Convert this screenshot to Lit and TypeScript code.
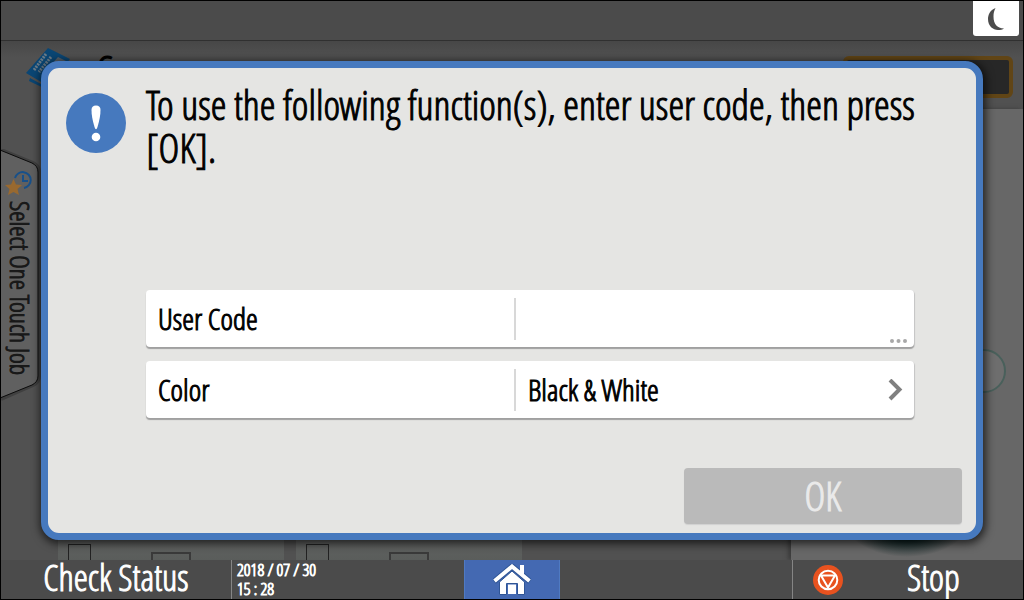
import { LitElement, html, css } from "lit";
import { customElement, state } from "lit/decorators.js";

const base = css`
  * {
    box-sizing: border-box;
  }
  svg {
    display: block;
    flex: none;
  }
  button,
  input,
  select {
    font: inherit;
    color: inherit;
    border: 0;
    margin: 0;
    padding: 0;
    background: none;
    border-radius: 0;
    -webkit-text-stroke: inherit;
  }
`;

/* The dimmed copier screen that lies behind the dialog. */
@customElement("job-screen")
class JobScreen extends LitElement {
  static styles = [
    base,
    css`
      :host {
        display: grid;
        grid-template-rows: auto 1fr;
        min-height: 0;
        overflow: hidden;
        background: #515151;
      }
      .top {
        display: flex;
        justify-content: flex-end;
        height: 40px;
        padding-right: 4px;
        background: #4b4b4b;
        border-bottom: 1px solid #303030;
      }
      .sleep {
        display: grid;
        place-items: center;
        width: 46px;
        height: 35px;
        background: #fff;
        border-radius: 0 0 3px 3px;
      }
      .body {
        display: grid;
        grid-template-columns: 1fr 232px;
        grid-template-rows: 68px 1fr;
        min-height: 0;
        background: linear-gradient(#474747, #515151 16px);
      }
      .head {
        display: flex;
        gap: 25px;
        padding: 7px 0 0 25px;
      }
      .title {
        margin: 0;
        font-size: 40px;
        font-weight: 400;
        line-height: 43px;
        color: #000;
      }
      .start {
        display: flex;
        padding: 15px 10px 11px 52px;
      }
      .frame {
        flex: 1;
        background: #272727;
        border: 4px solid #614516;
        border-radius: 6px;
      }
      .work {
        display: flex;
        min-height: 0;
      }
      .tab {
        display: grid;
        width: 42px;
        height: 252px;
        margin-top: 40px;
        flex: none;
      }
      .tab > * {
        grid-area: 1 / 1;
      }
      .label {
        display: flex;
        flex-direction: column;
        align-items: flex-start;
        gap: 4px;
        padding: 21px 0 0 4px;
      }
      .label span {
        writing-mode: vertical-rl;
        font-size: 26px;
        line-height: 30px;
        white-space: nowrap;
        color: #181818;
      }
      .cards {
        display: flex;
        gap: 12px;
        align-items: flex-end;
        padding-left: 15px;
      }
      .card {
        display: flex;
        gap: 60px;
        align-items: flex-end;
        width: 226px;
        height: 34px;
        padding-left: 10px;
        background: linear-gradient(#646464, #5a5d5b);
      }
      .tick {
        width: 23px;
        height: 16px;
        border: 1px solid #222;
        border-bottom: 0;
      }
      .thumb {
        width: 40px;
        height: 8px;
        border: 2px solid #3a3a3a;
        border-bottom: 0;
      }
      .panel {
        min-height: 0;
        background: #676767;
        box-shadow: -3px 0 4px #3c3c3c;
        overflow: hidden;
      }
      .panel svg {
        width: 100%;
        height: 100%;
      }
    `,
  ];

  render() {
    return html`
      <div class="top">
        <button class="sleep" aria-label="Sleep">
          <svg width="18" height="24" viewBox="0 0 18 24">
            <path fill="#4b4b4b" d="M8.500 1C3 3 1 8 1 12C1 19 6 23 11 23C13.500 23 15.500 22.500 17 21.500C10 21 6.500 17 6.500 9.500C6.500 6 7.200 3.500 8.500 1Z" />
          </svg>
        </button>
      </div>
      <div class="body">
        <div class="head">
          <svg width="45" height="42" viewBox="0 0 45 42">
            <path fill="#0a4674" d="M22 0 44 11 22 38 0 25ZM4 30 24 41 22 42 3 33Z" />
            <path fill="none" stroke="#6a7a86" stroke-width="3" stroke-dasharray="2 1" d="M20 6 8 22M25 9 13 24" />
            <path fill="#58616a" d="M32 9 40 13 30 22 25 17Z" />
          </svg>
          <h1 class="title">Copy</h1>
        </div>
        <div class="start"><div class="frame"></div></div>
        <div class="work">
          <div class="tab">
            <svg width="42" height="252" viewBox="0 0 42 252">
              <path fill="none" stroke="#404040" stroke-width="4" d="M0 1 32 14Q38 17 38 23V227Q38 233 32 236L0 250" />
              <path fill="#606060" stroke="#0c0c0c" d="M-1 1 31 14Q37 17 37 23V227Q37 233 31 236L-1 249Z" />
            </svg>
            <div class="label">
              <svg width="28" height="27" viewBox="0 0 28 27">
                <g fill="none" stroke="#17508a" stroke-width="2">
                  <path d="M10 8A8 8 0 1 1 19 18M18 5V11H23" />
                </g>
                <path fill="#99692f" d="M8.500 9 11 14.500 17 15 12.500 19 14 25 8.500 22 3 25 4.500 19 0 15 6 14.500Z" />
              </svg>
              <span>Select One Touch Job</span>
            </div>
          </div>
          <div class="cards">
            <div class="card"><div class="tick"></div><div class="thumb"></div></div>
            <div class="card"><div class="tick"></div><div class="thumb"></div></div>
          </div>
        </div>
        <div class="panel">
          <svg viewBox="0 0 232 451" preserveAspectRatio="xMaxYMax slice">
            <defs>
              <radialGradient id="glow">
                <stop offset="0.6" stop-color="#0b2020" />
                <stop offset="1" stop-color="#676767" />
              </radialGradient>
            </defs>
            <circle cx="193" cy="262" r="21" fill="#6e6e6e" stroke="#49605b" stroke-width="2" />
            <ellipse cx="116" cy="406" rx="66" ry="42" fill="url(#glow)" />
          </svg>
        </div>
      </div>
    `;
  }
}

/* The login prompt. */
@customElement("user-code-dialog")
class UserCodeDialog extends LitElement {
  @state() private code = "";

  static styles = [
    base,
    css`
      :host {
        display: flex;
        flex-direction: column;
        background: #e5e5e3;
        border: 7px solid #4679be;
        border-radius: 18px;
        box-shadow: 1px 2px 8px 2px rgba(0, 0, 0, 0.65);
      }
      .message {
        display: flex;
        gap: 20px;
        padding: 15px 50px 0 18px;
      }
      .message svg {
        margin-top: 10px;
      }
      .text {
        margin: 0;
        font-size: 40px;
        line-height: 43px;
        font-weight: 400;
        color: #000;
      }
      .form {
        display: grid;
        gap: 14px;
        margin: auto 62px 50px 98px;
      }
      .row {
        display: grid;
        grid-template-columns: 368px 1fr;
        height: 57px;
        padding: 8px 0;
        background: #fff;
        border-radius: 4px;
        box-shadow: 0 2px 1px #a0a0a0, 1px 1px 1px #c8c8c8;
        font-size: 30px;
        line-height: 42px;
        color: #000;
      }
      .name {
        padding-left: 12px;
      }
      .value {
        display: grid;
        border-left: 2px solid #d8d8d8;
      }
      .value > * {
        grid-area: 1 / 1;
        min-width: 0;
      }
      .field {
        width: 100%;
        height: 42px;
        padding-left: 12px;
        line-height: 42px;
        outline: 0;
        appearance: none;
      }
      .more {
        place-self: end;
        margin: 0 7px -3px 0;
        pointer-events: none;
      }
      .next {
        place-self: center end;
        margin-right: 11px;
        pointer-events: none;
      }
      .ok {
        align-self: flex-end;
        width: 278px;
        height: 56px;
        margin: 0 14px 9px 0;
        background: #bababa;
        border-radius: 4px;
        box-shadow: 0 1px 1px #d0d0d0;
        font-size: 40px;
        line-height: 56px;
        color: #eaeaea;
      }
    `,
  ];

  render() {
    return html`
      <div class="message">
        <svg width="60" height="60" viewBox="0 0 60 60">
          <circle cx="30" cy="30" r="30" fill="#4679be" />
          <path fill="#fff" d="M25.500 17Q25.500 12.500 30 12.500T34.500 17Q34.500 24 31.500 34Q30 38.500 28.500 34Q25.500 24 25.500 17Z" />
          <circle cx="30" cy="44" r="4.300" fill="#fff" />
        </svg>
        <h2 class="text">To use the following function(s), enter user code, then press [OK].</h2>
      </div>
      <div class="form">
        <div class="row">
          <label class="name" for="code">User Code</label>
          <div class="value">
            <input class="field" id="code" .value=${this.code}
              @input=${(e: Event) => (this.code = (e.target as HTMLInputElement).value)} />
            <svg class="more" width="17" height="4" viewBox="0 0 17 4" fill="#a8a8a8">
              <circle cx="2" cy="2" r="2" /><circle cx="8.500" cy="2" r="2" /><circle cx="15" cy="2" r="2" />
            </svg>
          </div>
        </div>
        <div class="row">
          <label class="name" for="color">Color</label>
          <div class="value">
            <select class="field" id="color">
              <option>Black &amp; White</option>
            </select>
            <svg class="next" width="15" height="22" viewBox="0 0 15 22">
              <path fill="none" stroke="#808080" stroke-width="4" d="M2 1 11.500 10.500 2 20" />
            </svg>
          </div>
        </div>
      </div>
      <button class="ok" ?disabled=${!this.code}>OK</button>
    `;
  }
}

/* The bar of fixed keys at the foot of the screen. */
@customElement("key-bar")
class KeyBar extends LitElement {
  static styles = [
    base,
    css`
      :host {
        display: grid;
        grid-template-columns: 1fr 96px 1fr;
        height: 39px;
        background: #4b4b4b;
        color: #fff;
      }
      .left,
      .right {
        display: flex;
        min-width: 0;
      }
      .right {
        justify-content: flex-end;
      }
      .status {
        width: 230px;
        padding-bottom: 4px;
        font-size: 36px;
        line-height: 35px;
        white-space: nowrap;
      }
      .clock {
        padding-left: 5px;
        border-left: 1px solid #858585;
        font-size: 17px;
        line-height: 19px;
        white-space: nowrap;
      }
      .clock time {
        display: block;
      }
      .home {
        display: grid;
        place-items: center;
        background: #4469b2;
        border: solid #4f7ac2;
        border-width: 0 1px;
      }
      .stop {
        display: flex;
        align-items: center;
        gap: 64px;
        width: 231px;
        padding-left: 20px;
        border-left: 1px solid #858585;
        font-size: 36px;
        line-height: 35px;
      }
      .stop span {
        padding-bottom: 4px;
      }
    `,
  ];

  render() {
    return html`
      <div class="left">
        <button class="status">Check Status</button>
        <div class="clock"><time>2018 / 07 / 30</time><time>15 : 28</time></div>
      </div>
      <button class="home" aria-label="Home">
        <svg width="38" height="31" viewBox="0 0 38 31">
          <path fill="#fff" stroke="#2f5596" d="M6.500 30.500V18L19 7 31.500 18V30.500H24.500V19.500H13.500V30.500Z" />
          <path fill="#fff" d="M15 20.500H23V30H15Z" />
          <path fill="none" stroke="#2f5596" stroke-width="6" d="M1 17.500 19 2.500 37 17.500" />
          <path fill="none" stroke="#fff" stroke-width="4" d="M1.500 17 19 2.500 36.500 17" />
          <path fill="#fff" d="M27 1H31V12L27 9Z" />
        </svg>
      </button>
      <div class="right">
        <button class="stop">
          <svg width="30" height="30" viewBox="0 0 30 30">
            <circle cx="15" cy="15" r="15" fill="#e8521f" />
            <g fill="none" stroke="#fff" stroke-width="2">
              <circle cx="15" cy="15" r="9.300" />
              <path d="M8 10.500H22L15 22.500Z" />
            </g>
          </svg>
          <span>Stop</span>
        </button>
      </div>
    `;
  }
}

@customElement("app-root")
class AppRoot extends LitElement {
  static styles = [
    base,
    css`
      :host {
        display: grid;
        grid-template-rows: 1fr auto;
        box-sizing: border-box;
        height: 100vh;
        border: 1px solid #000;
        position: relative;
        overflow: hidden;
        font-family: "Open Sans Condensed Light", "Roboto Condensed", sans-serif;
        -webkit-text-stroke: 1px;
      }
      .dialog {
        position: absolute;
        inset: 60px 40px 59px 40px;
      }
    `,
  ];

  render() {
    return html`
      <job-screen></job-screen>
      <key-bar></key-bar>
      <user-code-dialog class="dialog" role="dialog" aria-modal="true"></user-code-dialog>
    `;
  }
}
